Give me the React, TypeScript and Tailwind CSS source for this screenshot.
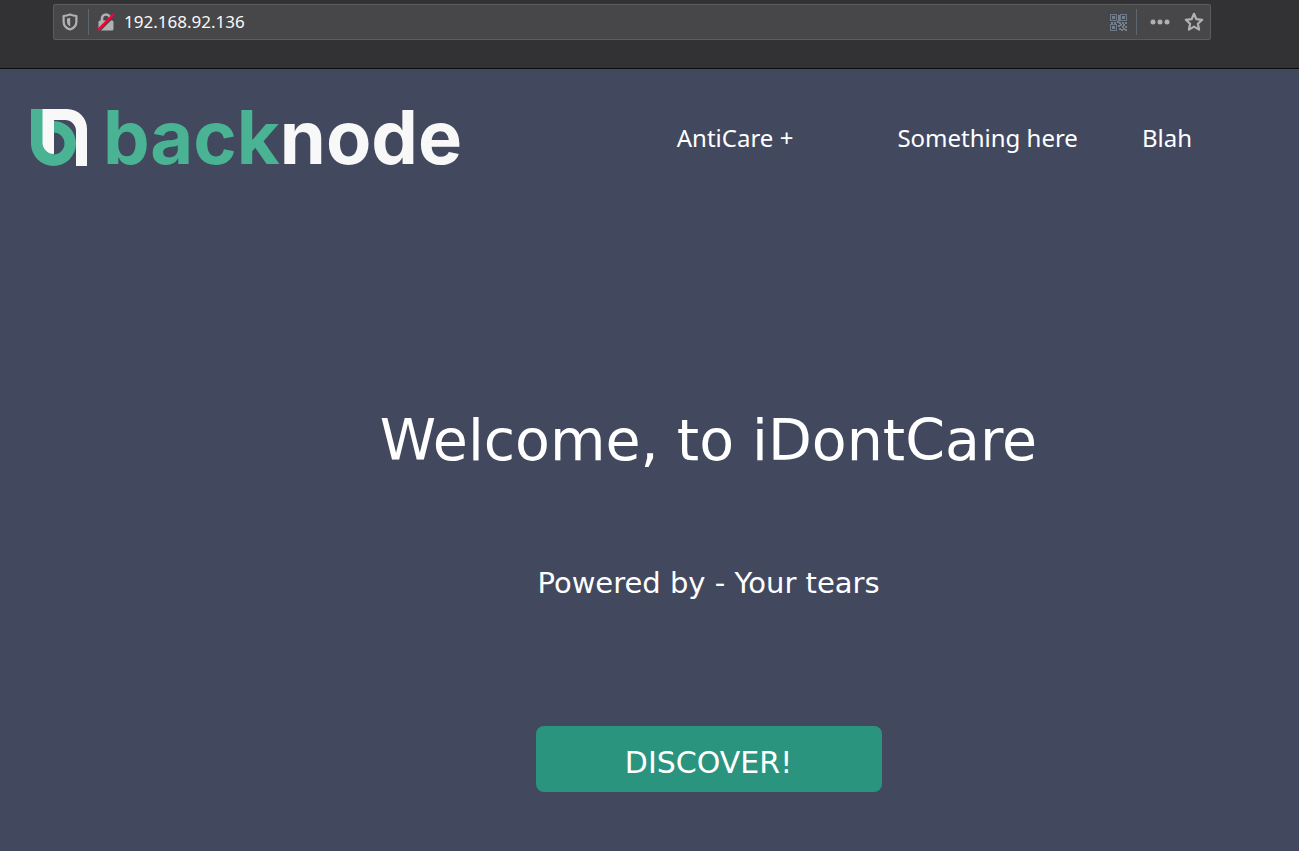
function ShieldIcon() {
  return (
    <svg viewBox="0 0 16 18" className="h-[18px] w-4" fill="none" aria-hidden="true">
      <path d="M8 1.500C10.200 2.400 12.200 2.900 14.400 3V8.500C14.400 12.400 11.800 15.300 8 16.500C4.200 15.300 1.600 12.400 1.600 8.500V3C3.800 2.900 5.800 2.400 8 1.500Z" stroke="#b1b1b3" strokeWidth="2.200" strokeLinejoin="round" />
      <path d="M8.200 4.800V13.400C5.900 12.400 5 10.800 5 8.500V5.500C6.200 5.400 7.200 5.200 8.200 4.800Z" fill="#b1b1b3" />
    </svg>
  );
}

function InsecureIcon() {
  return (
    <svg viewBox="0 0 18 18" className="size-[18px]" fill="none" aria-hidden="true">
      <path d="M5 9V5.500A4 4 0 0 1 13 5.500V9" stroke="#b1b1b3" strokeWidth="2.600" />
      <rect x="1.500" y="7.500" width="15" height="10" rx="1.500" fill="#b1b1b3" />
      <path d="M2.200 17.200L17.500 1.900" stroke="#474749" strokeWidth="3" />
      <path d="M1.500 16.200L16 1.700" stroke="#ff0039" strokeWidth="2.200" strokeLinecap="round" />
    </svg>
  );
}

const qrFinders = [
  [0, 0],
  [10, 0],
  [0, 10],
];

const qrCells = [
  [8, 1], [8, 5], [1, 8], [4, 8], [7, 7], [9, 8], [12, 8], [15, 8],
  [10, 10], [13, 10], [8, 11], [12, 12], [15, 12], [9, 14], [13, 14], [11, 15], [15, 15], [8, 3],
];

function QrIcon() {
  return (
    <svg viewBox="0 0 17 17" className="size-[17px]" fill="none" aria-hidden="true">
      {qrFinders.map(([x, y]) => (
        <g key={`${x}-${y}`}>
          <rect x={x + 0.5} y={y + 0.5} width="6" height="6" stroke="#6d7986" />
          <rect x={x + 2} y={y + 2} width="3" height="3" fill="#74818c" />
        </g>
      ))}
      {qrCells.map(([x, y]) => (
        <rect key={`${x}-${y}`} x={x} y={y} width="2" height="2" fill="#74818c" />
      ))}
    </svg>
  );
}

function DotsIcon() {
  return (
    <svg viewBox="0 0 20 6" className="h-[6px] w-5" fill="#b1b1b3" aria-hidden="true">
      <circle cx="3" cy="3" r="2.500" />
      <circle cx="10" cy="3" r="2.500" />
      <circle cx="17" cy="3" r="2.500" />
    </svg>
  );
}

function StarIcon() {
  return (
    <svg viewBox="0 0 20 20" className="size-5" fill="none" aria-hidden="true">
      <path d="M10 1.800L12.400 7.200L18.200 7.800L13.900 11.700L15.100 17.600L10 14.600L4.900 17.600L6.100 11.700L1.800 7.800L7.600 7.200Z" stroke="#b1b1b3" strokeWidth="2.200" strokeLinejoin="round" />
    </svg>
  );
}

function LogoMark() {
  return (
    <svg viewBox="0 0 56 57" className="h-[57px] w-14" aria-hidden="true">
      <path fillRule="evenodd" fill="#49b393" d="M0 0H22.500V12A22.500 22.500 0 1 1 0 34.500ZM22.500 23.500A11 11 0 0 1 22.500 45.500Z" />
      <path fill="#f8f8f8" d="M11.500 0H36A20 20 0 0 1 56 20V57H45V22A11 11 0 0 0 34 11H23V45A11.500 11.500 0 0 1 11.500 34Z" />
    </svg>
  );
}

export default function App() {
  return (
    <div className="flex min-h-screen flex-col bg-[#42495f] font-['Noto_Sans',sans-serif] text-white">
      <div className="border-b border-[#0c0c0d] bg-[#323234] pt-1 pr-[88px] pb-7 pl-[53px]">
        <div className="flex h-9 items-center rounded-xs border border-[#5c5c5e] bg-[#474749] pr-[6px] pl-2">
          <button type="button" aria-label="Tracking protection"><ShieldIcon /></button>
          <span className="mr-2 ml-[10px] h-[26px] w-px bg-[#5f6670]" />
          <button type="button" aria-label="Connection not secure"><InsecureIcon /></button>
          <input
            type="text"
            aria-label="Address"
            defaultValue="192.168.92.136"
            className="ml-[9px] min-w-0 flex-1 bg-transparent text-[17px] leading-6 text-[#f9f9fa] outline-none"
          />
          <button type="button" aria-label="QR code"><QrIcon /></button>
          <span className="mr-2 ml-[9px] h-[26px] w-px bg-[#5f6670]" />
          <button type="button" aria-label="Page actions" className="mr-[14px] ml-[5px]"><DotsIcon /></button>
          <button type="button" aria-label="Bookmark this page"><StarIcon /></button>
        </div>
      </div>

      <header className="flex items-center justify-between pt-10 pr-[107px] pl-[31px]">
        <a href="#" className="flex h-[57px] items-center gap-4">
          <LogoMark />
          <span className="font-[Inter,sans-serif] text-[74px] leading-[57px] font-bold">
            <span className="text-[#49b393]">back</span>
            <span className="text-[#f8f8f8]">node</span>
          </span>
        </a>
        <nav className="flex items-center text-2xl leading-8">
          <a href="#" className="mr-[104px]">AntiCare +</a>
          <a href="#" className="mr-[64px]">Something here</a>
          <a href="#">Blah</a>
        </nav>
      </header>

      <main className="flex flex-col items-center pt-[236px] pb-[57px] pl-[118px] font-['DejaVu_Sans',sans-serif]">
        <h1 className="text-[57px] leading-[76px]">Welcome, to iDontCare</h1>
        <p className="mt-[87px] text-[29px] leading-9">Powered by - Your tears</p>
        <button type="button" className="mt-[125px] h-[66px] w-[346px] rounded-lg bg-[#2b947e] pt-2 text-[30px] leading-10">
          DISCOVER!
        </button>
      </main>
    </div>
  );
}
